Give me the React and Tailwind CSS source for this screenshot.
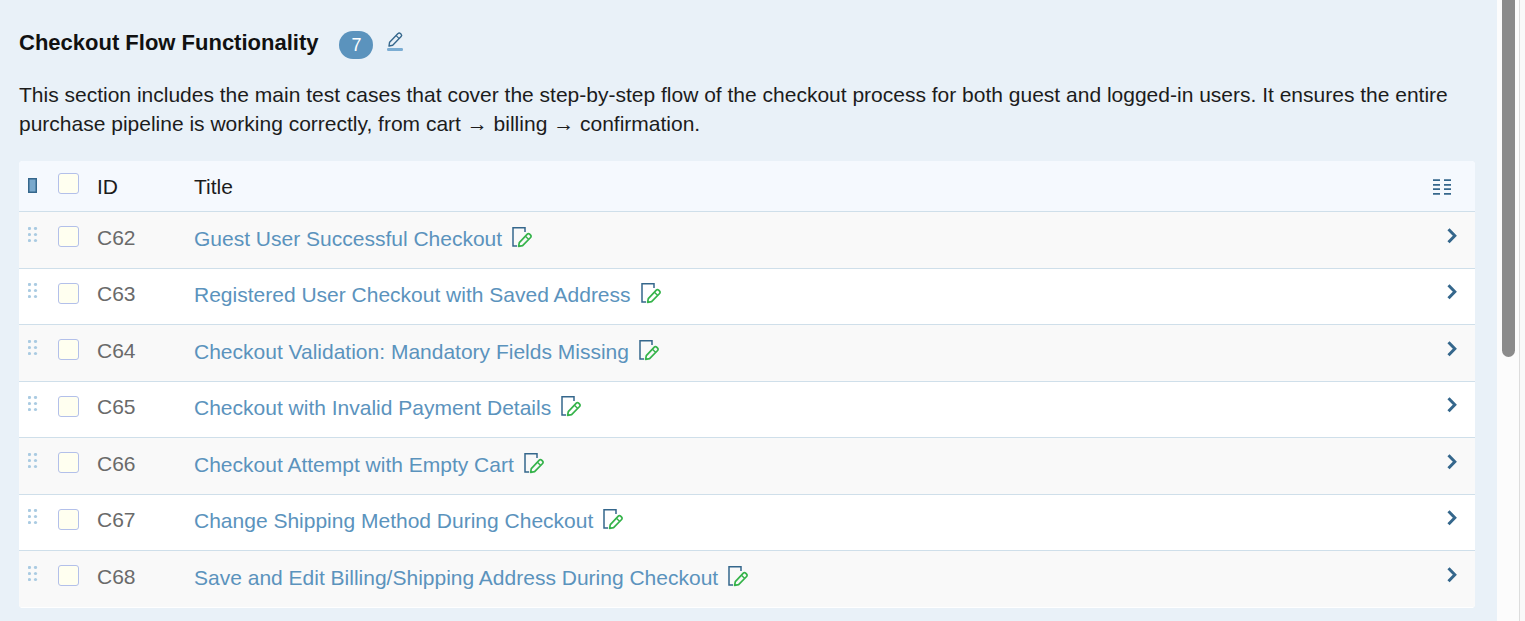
import { useState } from "react";

const cases = [
  { id: "C62", title: "Guest User Successful Checkout" },
  { id: "C63", title: "Registered User Checkout with Saved Address" },
  { id: "C64", title: "Checkout Validation: Mandatory Fields Missing" },
  { id: "C65", title: "Checkout with Invalid Payment Details" },
  { id: "C66", title: "Checkout Attempt with Empty Cart" },
  { id: "C67", title: "Change Shipping Method During Checkout" },
  { id: "C68", title: "Save and Edit Billing/Shipping Address During Checkout" },
];

function PencilLineIcon() {
  return (
    <svg width="18" height="20" viewBox="0 0 18 20" fill="none" aria-hidden="true">
      <path d="M3 15 3.6 11.2 12 2.6a1.7 1.7 0 0 1 2.5 0l.6.6a1.7 1.7 0 0 1 0 2.4L6.7 14.2Z" stroke="#35678c" strokeWidth="1.4" strokeLinejoin="round" />
      <path d="m10.2 4.6 3 3" stroke="#35678c" strokeWidth="1.3" />
      <rect x="1" y="17" width="16" height="3" rx="1.2" fill="#7badd3" />
    </svg>
  );
}

function EditIcon() {
  return (
    <svg width="22" height="22" viewBox="0 0 22 22" fill="none" aria-hidden="true">
      <path d="M6 20H2V1.8H14V6" stroke="#35678c" strokeWidth="1.5" />
      <path d="M7.6 20.3 8.3 16.6 16.3 8.2a1.6 1.6 0 0 1 2.3 0l1 1a1.6 1.6 0 0 1 0 2.3l-8 8.2Z" stroke="#35b34a" strokeWidth="1.7" strokeLinejoin="round" />
      <path d="m14.4 10.2 3.4 3.4" stroke="#35b34a" strokeWidth="1.4" />
    </svg>
  );
}

function GripIcon() {
  return (
    <svg width="10" height="16" viewBox="0 0 10 16" fill="#aacbe2" aria-hidden="true">
      {[2, 8, 14].map((y) => (
        <g key={y}>
          <circle cx="1.5" cy={y - 0.5} r="1.6" />
          <circle cx="7.5" cy={y - 0.5} r="1.6" />
        </g>
      ))}
    </svg>
  );
}

function ColumnsIcon() {
  return (
    <svg width="18" height="16" viewBox="0 0 18 16" fill="none" aria-hidden="true">
      <path d="M0 1.2H7M11 1.2H18M0 5.8H7M11 5.8H18M0 10.2H7M11 10.2H18M0 14.8H7M11 14.8H18" stroke="#35678c" strokeWidth="1.7" />
    </svg>
  );
}

function ChevronIcon() {
  return (
    <svg width="10" height="16" viewBox="0 0 10 16" fill="none" aria-hidden="true">
      <path d="M1.5 1.2 7.8 7.7 1.5 14.2" stroke="#35678c" strokeWidth="3" />
    </svg>
  );
}

function Check({ label, checked, onChange }) {
  return (
    <input
      type="checkbox"
      aria-label={label}
      checked={checked}
      onChange={onChange}
      className="block size-[21px] appearance-none rounded-[3px] border border-[#b3c0ea] bg-[#fffff0] checked:bg-[#5b93bd]"
    />
  );
}

export default function App() {
  const [selected, setSelected] = useState([]);
  const all = selected.length === cases.length;
  const toggle = (id) =>
    setSelected((s) => (s.includes(id) ? s.filter((x) => x !== id) : [...s, id]));

  return (
    <div className="flex h-screen overflow-hidden bg-[#e9f1f8] font-['Liberation_Sans',Arial,sans-serif] text-[#1c1c1c]">
      <main className="min-w-0 flex-1 pt-[27px] pr-[22px] pl-[19px]">
        <header className="flex h-8 items-center">
          <h1 className="text-[22px] leading-7 font-bold text-[#111111]">Checkout Flow Functionality</h1>
          <span className="mt-1 ml-[21px] flex h-7 w-[34px] items-center justify-center rounded-full bg-[#5b93bd] text-[18px] text-white">
            7
          </span>
          <button type="button" aria-label="Edit section" className="mb-1 ml-[13px]">
            <PencilLineIcon />
          </button>
        </header>
        <p className="mt-[21px] text-[21px] leading-[29px]">
          This section includes the main test cases that cover the step-by-step flow of the checkout process for both guest
          and logged-in users. It ensures the entire purchase pipeline is working correctly, from cart → billing →
          confirmation.
        </p>
        <div className="mt-[23px] overflow-hidden rounded-[4px] bg-white">
          <table className="w-full table-fixed border-collapse text-left text-[21px] leading-6">
            <thead>
              <tr className="h-[50px] border-b border-[#cfdfea] bg-[#f5f9fe]">
                <th className="w-[39px] p-0 pl-[9px]">
                  <svg width="9" height="15" viewBox="0 0 9 15" className="block" aria-hidden="true">
                    <rect x="0.75" y="0.75" width="7.5" height="13.5" fill="#7aa9cc" stroke="#35678c" strokeWidth="1.5" />
                  </svg>
                </th>
                <th className="w-[39px] p-0 pb-1">
                  <Check
                    label="Select all"
                    checked={all}
                    onChange={() => setSelected(all ? [] : cases.map((c) => c.id))}
                  />
                </th>
                <th className="w-[97px] p-0 pt-[2px] font-normal">ID</th>
                <th className="p-0 pt-[2px] font-normal">Title</th>
                <th className="w-[46px] p-0">
                  <button type="button" aria-label="Columns" className="mt-[2px] ml-1 block">
                    <ColumnsIcon />
                  </button>
                </th>
              </tr>
            </thead>
            <tbody>
              {cases.map((c) => (
                <tr
                  key={c.id}
                  className="h-[57px] border-b border-[#cfdfea] bg-[#f9f9f9] last:border-white even:h-14 even:bg-white"
                >
                  <td className="p-0 pb-[10px] pl-[9px]">
                    <button type="button" aria-label={`Move ${c.id}`} className="block">
                      <GripIcon />
                    </button>
                  </td>
                  <td className="p-0 pb-[6px]">
                    <Check label={`Select ${c.id}`} checked={selected.includes(c.id)} onChange={() => toggle(c.id)} />
                  </td>
                  <td className="p-0 pb-1 text-[#6a6a6a]">{c.id}</td>
                  <td className="p-0 pb-[2px]">
                    <div className="flex items-center gap-[9px]">
                      <a href={`#${c.id}`} className="text-[#5b93bd]">
                        {c.title}
                      </a>
                      <button type="button" aria-label={`Edit ${c.id}`} className="mb-1">
                        <EditIcon />
                      </button>
                    </div>
                  </td>
                  <td className="p-0 pb-2 pl-[18px]">
                    <button type="button" aria-label={`Open ${c.id}`} className="block">
                      <ChevronIcon />
                    </button>
                  </td>
                </tr>
              ))}
            </tbody>
          </table>
        </div>
      </main>
      <div className="w-[23px] border-r border-[#dddddd] bg-[#fcfcfc] pl-[5px]">
        <div className="h-[357px] w-[13px] rounded-b-full bg-[#8b8b8b]" />
      </div>
      <div className="w-[5px] bg-[#f9f9f9]" />
    </div>
  );
}
